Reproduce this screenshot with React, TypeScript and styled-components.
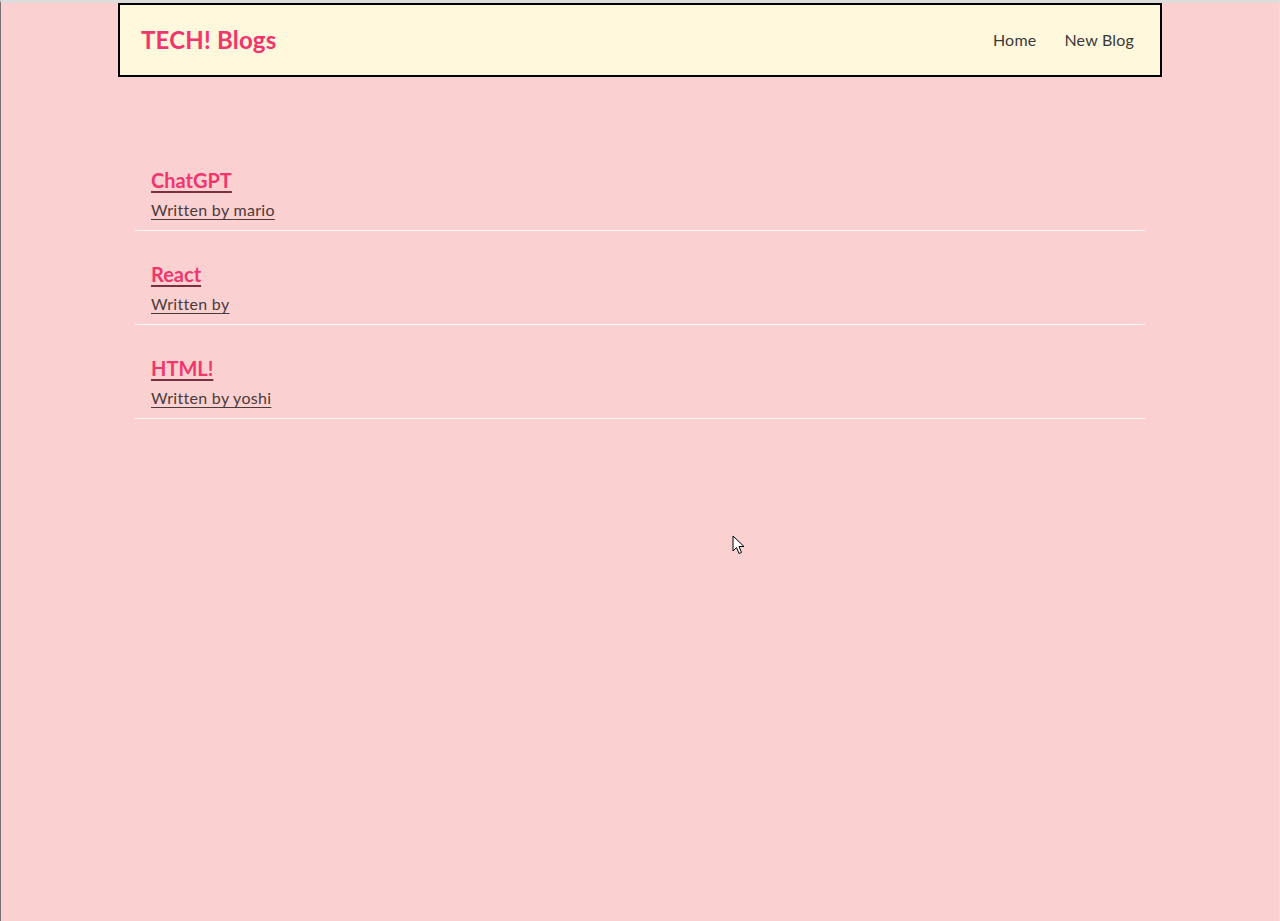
import React from "react";
import styled, { createGlobalStyle } from "styled-components";

const GlobalStyle = createGlobalStyle`
  html, body { margin: 0; padding: 0; }
  body {
    background: #fbd0d0;
    font-family: "Lato", "Noto Sans", sans-serif;
    color: #333;
    min-height: 921px;
    box-sizing: border-box;
    border-top: 3px solid #dcdcdc;
    border-left: 1px solid #7a6e6e;
    border-right: 1px solid #e8dede;
  }
  * { box-sizing: border-box; }
`;

const Page = styled.div`
  position: relative;
  min-height: 918px;
`;

const Navbar = styled.nav`
  width: 1044px;
  height: 74px;
  margin: 0 auto;
  padding: 0 26px 0 21px;
  display: flex;
  align-items: center;
  background: #fff8dc;
  border: 2px solid #000;
`;

const Brand = styled.h1`
  margin: 0 0 1px;
  font-size: 24px;
  font-weight: 700;
  color: #f1356d;
  letter-spacing: 0.2px;
`;

const Links = styled.div`
  margin-left: auto;
  display: flex;
  gap: 28px;
`;

const NavLink = styled.a`
  font-size: 16px;
  color: #3a3a3a;
  text-decoration: none;
  letter-spacing: 0.2px;
  margin-bottom: 2px;
`;

const Content = styled.main`
  width: 1010px;
  margin: 80px auto 0;
`;

const Preview = styled.div`
  padding: 11px 16px 10px;
  margin-bottom: 20px;
  border-bottom: 1px solid #fafafa;
`;

const Title = styled.a`
  display: block;
  width: max-content;
  font-size: 20px;
  font-weight: 700;
  line-height: 24px;
  color: #f1356d;
  text-decoration: underline;
  text-decoration-color: #7a3040;
  text-underline-offset: 3px;
  margin-bottom: 8px;
`;

const Author = styled.a`
  display: block;
  width: max-content;
  font-size: 16px;
  line-height: 20px;
  color: #4a3b3b;
  text-decoration: underline;
  text-underline-offset: 3px;
  letter-spacing: 0.3px;
`;

const Cursor = styled.svg`
  position: absolute;
  left: 731px;
  top: 532px;
`;

const blogs = [
  { title: "ChatGPT", author: "mario" },
  { title: "React", author: "" },
  { title: "HTML!", author: "yoshi" },
];

export default function App() {
  return (
    <Page>
      <GlobalStyle />
      <Navbar>
        <Brand>TECH! Blogs</Brand>
        <Links>
          <NavLink href="#">Home</NavLink>
          <NavLink href="#">New Blog</NavLink>
        </Links>
      </Navbar>
      <Content>
        {blogs.map((b) => (
          <Preview key={b.title}>
            <Title href="#">{b.title}</Title>
            <Author href="#">Written by {b.author}</Author>
          </Preview>
        ))}
      </Content>
      <Cursor width="14" height="22" viewBox="0 0 14 22">
        <path d="M1 1 L1 16 L4.5 12.5 L7 18.5 L9.5 17.5 L7 11.5 L12 11.5 Z" fill="#fff" stroke="#000" strokeWidth="1" strokeLinejoin="round" />
      </Cursor>
    </Page>
  );
}
